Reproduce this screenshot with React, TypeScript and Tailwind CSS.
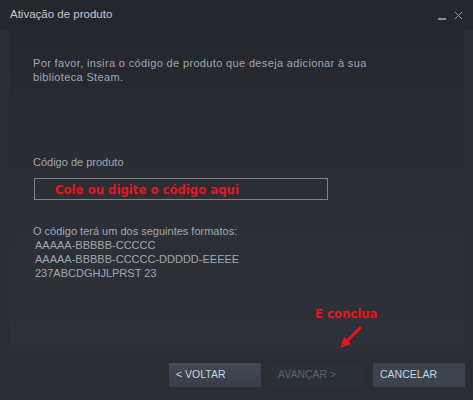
import { X } from "lucide-react";

const font = { fontFamily: '"Liberation Sans", Arial, sans-serif' };
const red = { fontFamily: '"Liberation Sans Narrow", "DejaVu Sans Condensed", sans-serif' };

const App = () => {
  return (
    <div className="w-[473px] h-[400px] bg-[#2a2d32] flex flex-col overflow-hidden" style={font}>
      {/* title bar */}
      <div className="h-[30px] shrink-0 bg-[#24272e] flex items-center justify-between pl-[10px] pr-[8px]">
        <span className="text-[11.5px] text-[#c4c8ce]">Ativação de produto</span>
        <div className="flex items-end gap-[6px] text-[#9ea3aa]">
          <div className="w-[8px] h-[2px] bg-[#8a8f96] mb-[2px]" />
          <X size={13} strokeWidth={1.6} />
        </div>
      </div>

      {/* content panel */}
      <div className="mx-[9px] h-[321px] shrink-0 bg-gradient-to-b from-[#24272e] via-[#2b2e35] to-[#2e3138] flex flex-col pl-[24px] relative">
        <p className="text-[11px] leading-[14px] text-[#a0a7b0] mt-[26px] w-[345px] tracking-[0.35px]">
          Por favor, insira o código de produto que deseja adicionar à sua biblioteca Steam.
        </p>

        <span className="text-[11px] text-[#a0a7b0] mt-[71px] leading-[14px]">Código de produto</span>
        <div className="mt-[9px] w-[294px] h-[22px] border border-[#7d838b] flex items-center pl-[20px] ml-[1px]">
          <span className="text-[13px] leading-[15px] text-[#e8141b] font-bold" style={red}>
            Cole ou digite o código aqui
          </span>
        </div>

        <div className="mt-[24px] text-[11px] leading-[14px] text-[#a0a7b0] flex flex-col">
          <span>O código terá um dos seguintes formatos:</span>
          <span className="pl-[2px]">AAAAA-BBBBB-CCCCC</span>
          <span className="pl-[2px]">AAAAA-BBBBB-CCCCC-DDDDD-EEEEE</span>
          <span className="pl-[2px]">237ABCDGHJLPRST 23</span>
        </div>

        {/* annotation */}
        <span className="absolute left-[306px] top-[274px] text-[13px] text-[#e8141b] font-bold" style={red}>
          E conclua
        </span>
        <svg className="absolute left-[325px] top-[295px]" width="30" height="26" viewBox="0 0 30 26">
          <line x1="27" y1="2" x2="12" y2="17" stroke="#e8141b" strokeWidth="3" />
          <polygon points="6,23 10,12 17,19" fill="#e8141b" />
        </svg>
      </div>

      {/* buttons */}
      <div className="flex justify-end gap-[10px] pr-[8px] mt-[12px]">
        <button className="w-[92px] h-[24px] bg-gradient-to-b from-[#434955] to-[#383d47] text-[#c6d4df] text-[10.5px] text-left pl-[7px]">
          &lt; VOLTAR
        </button>
        <button className="w-[92px] h-[24px] bg-[#2b2f36] text-[#5c6168] text-[10.5px] text-left pl-[7px]">
          AVANÇAR &gt;
        </button>
        <button className="w-[92px] h-[24px] bg-[#3d434d] text-[#c6d4df] text-[10.5px] text-left pl-[7px]">
          CANCELAR
        </button>
      </div>
    </div>
  );
};

export default App;
